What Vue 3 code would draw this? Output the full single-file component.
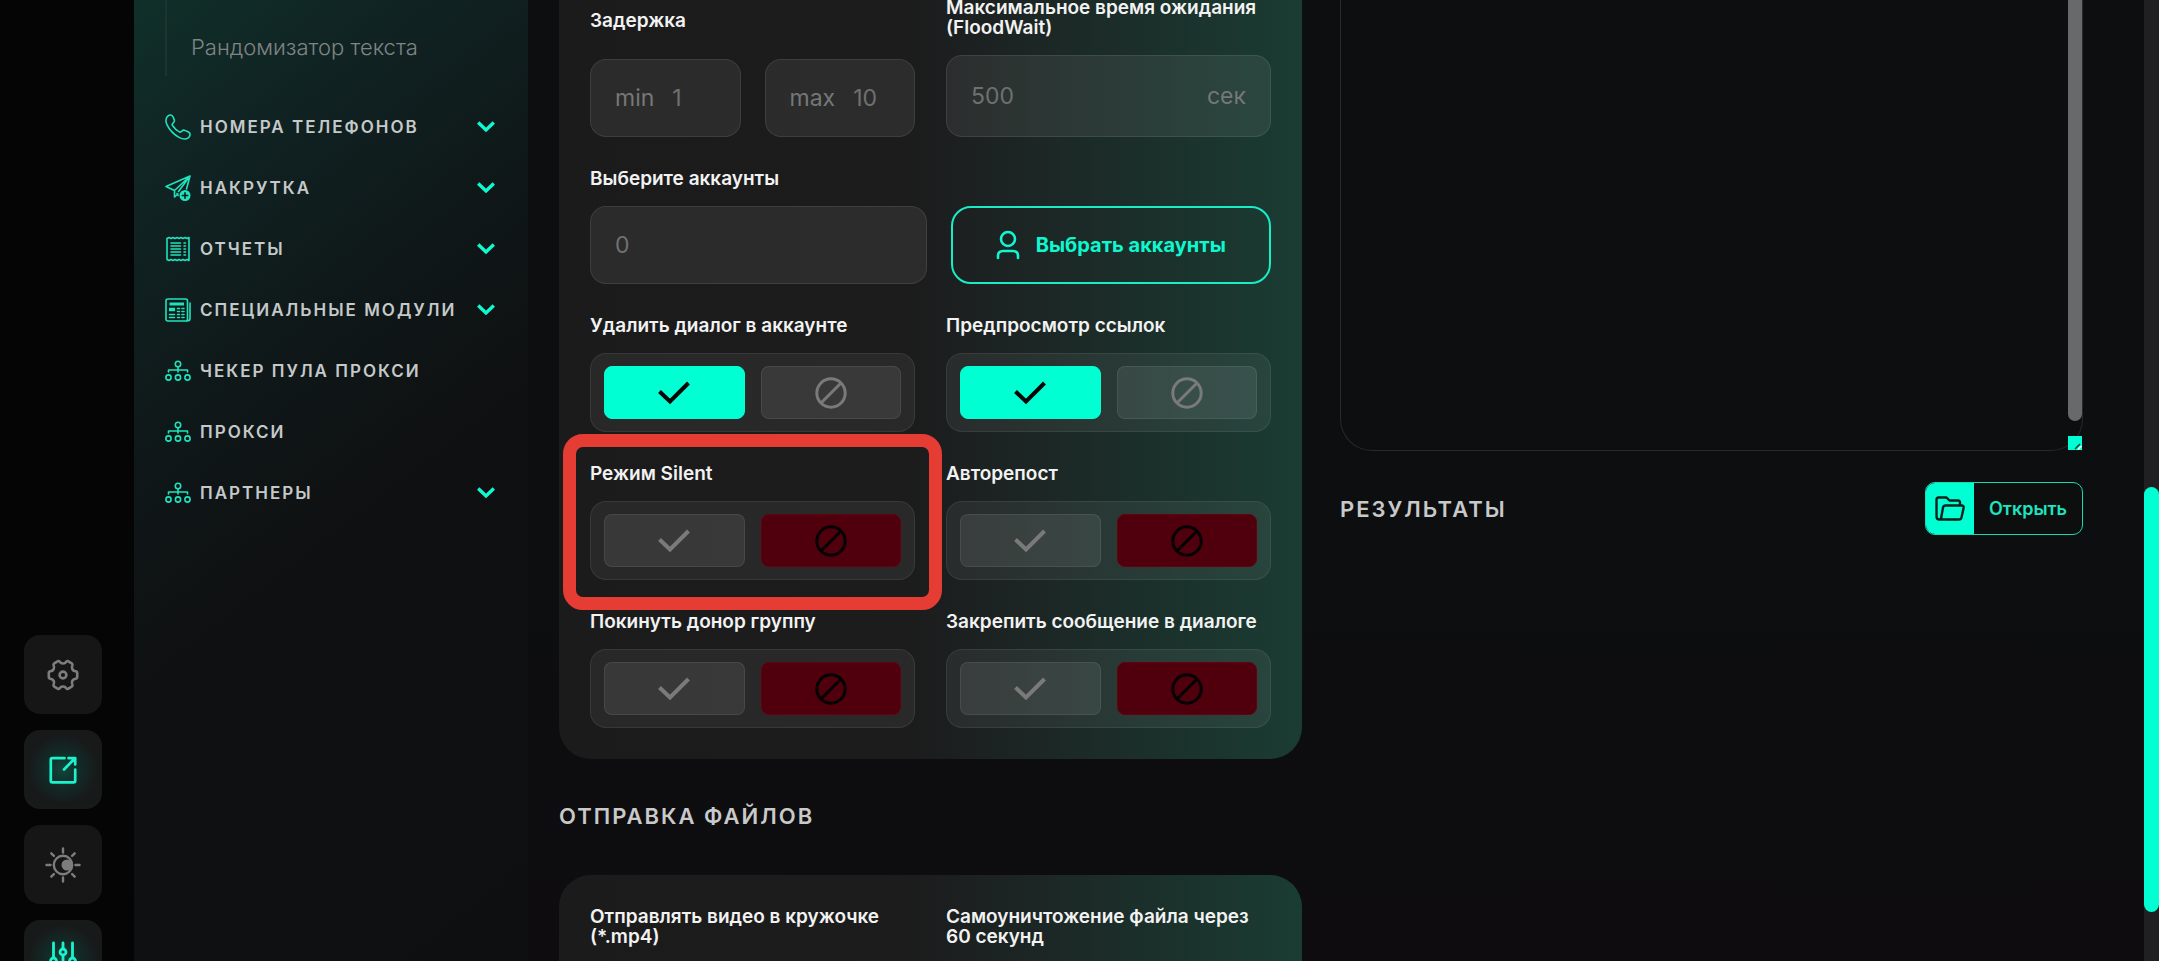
<template>
  <div class="shell">
    <aside class="rail">
      <button class="rail-btn" aria-label="Настройки">
        <svg viewBox="0 0 32 32" width="32" height="32" fill="none" stroke="currentColor" stroke-width="2.6" stroke-linejoin="round">
          <path d="M10.2 2.6C11 1.8 12.300 2 12.900 2.900C14 5 18 5 19.100 2.900C19.700 2 21 1.800 21.800 2.600L24.700 4.400C25.400 4.900 25.700 5.800 25.300 6.600C24 9 25.700 12 28.600 12.300C29.500 12.400 30.200 13.100 30.200 14V18C30.200 18.900 29.500 19.600 28.600 19.700C25.700 20 24 23 25.300 25.400C25.700 26.200 25.400 27.100 24.700 27.600L21.800 29.400C21 30.200 19.700 30 19.100 29.100C18 27 14 27 12.900 29.100C12.300 30 11 30.200 10.200 29.400L7.300 27.600C6.600 27.100 6.300 26.200 6.700 25.400C8 23 6.300 20 3.400 19.700C2.500 19.600 1.800 18.900 1.800 18V14C1.800 13.100 2.500 12.400 3.400 12.300C6.300 12 8 9 6.700 6.600C6.300 5.800 6.600 4.900 7.300 4.400Z" />
          <circle cx="16" cy="16" r="3.400" />
        </svg>
      </button>
      <button class="rail-btn active" aria-label="Открыть в новом окне">
        <svg viewBox="0 0 28 28" width="28" height="28" fill="none" stroke="currentColor" stroke-width="2.700" stroke-linecap="round" stroke-linejoin="round">
          <path d="M15.500 2.200H3.200Q1.800 2.200 1.800 3.600V25Q1.800 26.400 3.200 26.400H24.800Q26.200 26.400 26.200 25V13.500M15 13.500L26 2.200M19.500 2.200H26.200V8.500" />
        </svg>
      </button>
      <button class="rail-btn" aria-label="Тема">
        <svg viewBox="0 0 36 36" width="36" height="36" fill="none" stroke="currentColor" stroke-width="2.400" stroke-linecap="round">
          <circle cx="18" cy="18" r="9.200" />
          <circle cx="22" cy="18" r="5.500" fill="currentColor" stroke="none" />
          <path d="M18 1.500v4M18 30.500v4M1.500 18h4M30.500 18h4M6.300 6.300l2.600 2.600M27.100 27.100l2.600 2.600M29.700 6.300l-2.600 2.600M8.900 27.100l-2.600 2.600" />
        </svg>
      </button>
      <button class="rail-btn active" aria-label="Фильтры">
        <svg viewBox="0 0 28 38" width="28" height="38" fill="none" stroke="currentColor" stroke-width="2.800" stroke-linecap="round">
          <circle cx="4.500" cy="20" r="3" />
          <circle cx="14" cy="11" r="3" />
          <circle cx="23.500" cy="20" r="3" />
          <path d="M4.500 2v14M4.500 24v10M14 2v5M14 15v19M23.500 2v14M23.500 24v10" />
        </svg>
      </button>
    </aside>

    <nav class="sidebar">
      <div class="submenu"><a href="#">Рандомизатор текста</a></div>
      <a v-for="item in menu" :key="item.title" href="#" class="menu-item">
        <svg class="menu-icon" viewBox="0 0 26 26" width="26" height="26" fill="none" stroke="currentColor" stroke-width="1.600" stroke-linecap="round" stroke-linejoin="round">
          <template v-if="item.icon === 'phone'">
            <path d="M2.200 2.800C3.800 .6 6.700 .4 7.900 2.600L9.200 5.600C9.800 7.100 9.200 8.200 8 9.100C7.200 9.800 7 10.600 7.500 11.500C9.300 14.200 11.600 16.400 14.400 17.900C15.300 18.300 16 18.100 16.700 17.300C17.600 16.200 18.700 15.900 20 16.400L23.400 18C25.800 19.200 25.500 22.100 23.300 23.800C20.600 25.800 17.300 25.200 14 23.400C9 20.600 4.800 16.500 2.200 11.200C.6 8 .4 5.300 2.200 2.800Z" />
          </template>
          <template v-else-if="item.icon === 'plane'">
            <path d="M13 19L9.500 22V15.500L25 1L1 11.500L9.500 15.500M25 1L13.500 16.500M25 1L21.500 14M13 20.500L12 18.500" />
            <circle cx="20" cy="20.500" r="5.500" fill="currentColor" stroke="none" />
            <path d="M20 17.800v5.400M17.300 20.500h5.400" stroke="#0f1b1b" />
          </template>
          <template v-else-if="item.icon === 'report'">
            <path d="M2 2.500L4 1.500L6 2.500L8 1.500L10 2.500L12 1.500L14 2.500L16 1.500L18 2.500L20 1.500L22 2.500L24 1.500V24.500L22 23.500L20 24.500L18 23.500L16 24.500L14 23.500L12 24.500L10 23.500L8 24.500L6 23.500L4 24.500L2 23.500Z" />
            <path d="M6 7h9.500M6 10h9.500M6 13h9.500M6 16h9.500M6 19h9.500M19 7h1.500M19 10h1.500M19 13h1.500M19 16h1.500M19 19h1.500" />
          </template>
          <template v-else-if="item.icon === 'news'">
            <rect x="1" y="2" width="21.500" height="22" rx="2" />
            <path d="M25 6v15.500Q25 24 22 24" />
            <path d="M4.500 7h14.500" stroke-width="3" stroke-linecap="butt" />
            <path d="M4 12.500h6" stroke-width="3.500" stroke-linecap="butt" />
            <path d="M12.500 11.500h2M17 11.500h2M12.500 14.500h2M17 14.500h2M4.500 17.500h5M12.500 17.500h2M17 17.500h2M4.500 20.500h5M12.500 20.500h2M17 20.500h2" />
          </template>
          <template v-else>
            <circle cx="13" cy="6" r="2.700" />
            <circle cx="3.500" cy="19.500" r="2.600" />
            <circle cx="13" cy="19.500" r="2.600" />
            <circle cx="22.500" cy="19.500" r="2.600" />
            <path d="M13 9v5M3.500 14V12H22.500V14" />
          </template>
        </svg>
        <span class="menu-title">{{ item.title }}</span>
        <svg v-if="item.nested" class="chevron" viewBox="0 0 18 12" width="18" height="12" fill="none" stroke="currentColor" stroke-width="3.400">
          <path d="M1.200 1.500L9 9L16.800 1.500" />
        </svg>
      </a>
    </nav>

    <main class="content">
      <section class="column">
        <div class="card card-settings">
          <div class="row">
            <div class="field field-delay">
              <label class="label" for="delay-min">Задержка</label>
              <div class="pair">
                <div class="box">
                  <span class="hint">min</span>
                  <input id="delay-min" class="text-input" placeholder="1" />
                </div>
                <div class="box">
                  <span class="hint">max</span>
                  <input class="text-input" placeholder="10" aria-label="max" />
                </div>
              </div>
            </div>
            <div class="field">
              <label class="label" for="flood">Максимальное время ожидания (FloodWait)</label>
              <div class="box box-tall">
                <input id="flood" class="text-input" placeholder="500" />
                <span class="hint">сек</span>
              </div>
            </div>
          </div>

          <div class="field">
            <label class="label" for="accounts">Выберите аккаунты</label>
            <div class="accounts">
              <div class="box">
                <input id="accounts" class="text-input" placeholder="0" />
              </div>
              <button class="select-btn">
                <svg viewBox="0 0 24 30" width="24" height="30" fill="none" stroke="currentColor" stroke-width="2.600" stroke-linecap="round">
                  <circle cx="12" cy="9" r="7" />
                  <path d="M2 28V26Q2 21 7 21H17Q22 21 22 26V28" />
                </svg>
                Выбрать аккаунты
              </button>
            </div>
          </div>

          <div v-for="(pair, i) in toggles" :key="i" class="row">
            <div v-for="item in pair" :key="item.title" class="field" :class="{ marked: item.marked }">
              <span class="label">{{ item.title }}</span>
              <div class="toggle" role="group" :aria-label="item.title">
                <button class="toggle-btn" :class="{ on: item.value }" aria-label="Да" @click="item.value = true">
                  <svg viewBox="0 0 32 24" width="32" height="24" fill="none" stroke="currentColor" stroke-width="4">
                    <path d="M1.500 10.500L12 20.500L30.500 2" />
                  </svg>
                </button>
                <button class="toggle-btn" :class="{ off: !item.value }" aria-label="Нет" @click="item.value = false">
                  <svg viewBox="0 0 32 32" width="32" height="32" fill="none" stroke="currentColor" stroke-width="3">
                    <circle cx="16" cy="16" r="14.200" />
                    <path d="M6 26L26 6" />
                  </svg>
                </button>
              </div>
            </div>
          </div>
        </div>

        <h2 class="title">ОТПРАВКА ФАЙЛОВ</h2>

        <div class="card card-files">
          <div class="row">
            <span class="label">Отправлять видео в кружочке<br />(*.mp4)</span>
            <span class="label">Самоуничтожение файла через<br />60 секунд</span>
          </div>
        </div>
      </section>

      <section class="column">
        <div class="log">
          <textarea class="log-text" aria-label="Лог" readonly></textarea>
          <span class="log-thumb"></span>
          <svg class="log-grip" viewBox="0 0 14 14" width="14" height="14">
            <rect width="14" height="14" fill="#00ffd2" />
            <path d="M7 13L12 8" stroke="#0c3a33" stroke-width="1.500" />
            <path d="M10 13.500L13.500 10" stroke="#fff" stroke-width="1.500" />
          </svg>
        </div>
        <div class="results">
          <h2 class="title">РЕЗУЛЬТАТЫ</h2>
          <button class="open-btn">
            <span class="open-icon">
              <svg viewBox="0 0 30 25" width="30" height="25" fill="none" stroke="currentColor" stroke-width="2.400" stroke-linecap="round" stroke-linejoin="round">
                <path d="M25 8V6.500Q25 4.500 23 4.500H14.500L11.500 1.500H3.500Q1.500 1.500 1.500 3.500V20.500Q1.500 23.500 4.500 23.500H24Q26 23.500 26.500 21.500L28.600 12Q29 9.500 26.500 9.500H10.500Q8.500 9.500 8 11.500L6 23" />
              </svg>
            </span>
            <span class="open-text">Открыть</span>
          </button>
        </div>
      </section>
    </main>

    <div class="scrollbar"><span class="scrollbar-thumb"></span></div>
  </div>
</template>

<script setup>
import { ref } from 'vue';

const menu = [
  { title: 'НОМЕРА ТЕЛЕФОНОВ', icon: 'phone', nested: true },
  { title: 'НАКРУТКА', icon: 'plane', nested: true },
  { title: 'ОТЧЕТЫ', icon: 'report', nested: true },
  { title: 'СПЕЦИАЛЬНЫЕ МОДУЛИ', icon: 'news', nested: true },
  { title: 'ЧЕКЕР ПУЛА ПРОКСИ', icon: 'tree' },
  { title: 'ПРОКСИ', icon: 'tree' },
  { title: 'ПАРТНЕРЫ', icon: 'tree', nested: true }
];

const toggles = ref([
  [
    { title: 'Удалить диалог в аккаунте', value: true },
    { title: 'Предпросмотр ссылок', value: true }
  ],
  [
    { title: 'Режим Silent', value: false, marked: true },
    { title: 'Авторепост', value: false }
  ],
  [
    { title: 'Покинуть донор группу', value: false },
    { title: 'Закрепить сообщение в диалоге', value: false }
  ]
]);
</script>

<style>
body {
  margin: 0;
  background: #0d0e10;
}
</style>

<style scoped>
* {
  box-sizing: border-box;
}
.shell {
  display: flex;
  height: 100vh;
  overflow: hidden;
  background: linear-gradient(180deg, #0c0e10 0%, #0d0e10 60%, #0e0c0f 100%);
  color: #f2f2f2;
  font-family: Inter, "Liberation Sans", sans-serif;
}
button,
input,
textarea {
  font-family: inherit;
}
button {
  padding: 0;
  cursor: pointer;
}
a {
  color: inherit;
  text-decoration: none;
}

/* rail */
.rail {
  flex: 0 0 134px;
  display: flex;
  flex-direction: column;
  justify-content: flex-end;
  gap: 16px;
  padding-left: 24px;
  margin-bottom: -38px;
  background: #050505;
}
.rail-btn {
  flex: 0 0 79px;
  width: 78px;
  display: flex;
  align-items: center;
  justify-content: center;
  border: 0;
  border-radius: 16px;
  background: #161616;
  color: #7d7d7d;
}
.rail-btn.active {
  background: radial-gradient(circle, #10463c 0%, #122a26 32%, #181a1a 62%);
  color: #1cf2cb;
}

/* sidebar */
.sidebar {
  flex: 0 0 394px;
  padding: 0 33px 0 31px;
  background: linear-gradient(142deg, #10302a 0%, #102222 18%, #0f1718 38%, #0f1011 56%, #0e0f11 100%);
}
.submenu {
  height: 76px;
  margin-bottom: 20px;
  padding: 32px 0 0 24px;
  border-left: 2px solid #1d3530;
  color: #7f8584;
  font-size: 22px;
  font-weight: 300;
  line-height: 30px;
}
.menu-item {
  display: flex;
  align-items: center;
  height: 61px;
  color: #c5c9c9;
}
.menu-icon {
  flex: none;
  margin-right: 9px;
  color: #1fe3bd;
}
.menu-title {
  flex: 1;
  font-size: 17px;
  font-weight: 600;
  letter-spacing: 2px;
  white-space: nowrap;
}
.chevron {
  color: #0ffad0;
}

/* content */
.content {
  flex: 1;
  display: grid;
  grid-template-columns: 1fr 1fr;
  gap: 38px;
  padding: 0 61px 0 31px;
}
.column {
  min-width: 0;
}
.card {
  display: flex;
  flex-direction: column;
  gap: 32px;
  padding: 31px;
  background: linear-gradient(90deg, #1b1b1c 0%, #1c1c1d 48%, #1c2926 68%, #1a3c33 100%);
}
.card-settings {
  margin-top: -2px;
  padding-top: 0;
  border-radius: 0 0 32px 32px;
}
.card-files {
  padding-top: 32px;
  border-radius: 32px 32px 0 0;
}
.row {
  display: grid;
  grid-template-columns: 1fr 1fr;
  gap: 31px;
}
.field {
  position: relative;
  display: flex;
  flex-direction: column;
  justify-content: space-between;
  gap: 17px;
}
.field-delay {
  padding-top: 13px;
}
.label {
  font-size: 19px;
  font-weight: 600;
  line-height: 20px;
}
.pair {
  display: grid;
  grid-template-columns: 1fr 1fr;
  gap: 24px;
}
.accounts {
  display: grid;
  grid-template-columns: 21fr 20fr;
  gap: 24px;
}
.box {
  display: flex;
  align-items: center;
  gap: 18px;
  height: 78px;
  padding: 0 24px;
  border: 1px solid rgba(255, 255, 255, 0.09);
  border-radius: 16px;
  background: rgba(255, 255, 255, 0.07);
  color: #757877;
  font-size: 23px;
}
.box-tall {
  height: 82px;
}
.text-input {
  flex: 1;
  width: 0;
  min-width: 0;
  padding: 0;
  border: 0;
  outline: 0;
  background: none;
  color: inherit;
  font-size: 23px;
}
.text-input::placeholder {
  color: #6e7170;
}
.select-btn {
  display: flex;
  align-items: center;
  justify-content: center;
  gap: 16px;
  border: 2px solid #19ecc6;
  border-radius: 20px;
  background: none;
  color: #0ff7cf;
  font-size: 20px;
  font-weight: 700;
}
.toggle {
  display: grid;
  grid-template-columns: 1fr 1fr;
  gap: 16px;
  height: 79px;
  padding: 12px 13px;
  border: 1px solid rgba(255, 255, 255, 0.08);
  border-radius: 16px;
  background: rgba(255, 255, 255, 0.06);
}
.toggle-btn {
  display: flex;
  align-items: center;
  justify-content: center;
  border: 1px solid rgba(255, 255, 255, 0.08);
  border-radius: 8px;
  background: rgba(255, 255, 255, 0.08);
  color: #7a7a7a;
}
.toggle-btn.on {
  border-color: #00ffd2;
  background: #00ffd2;
  color: #050505;
}
.toggle-btn.off {
  border-color: #65000f;
  background: #50000d;
  color: #050203;
}

/* highlighted option */
.marked::after {
  content: "";
  position: absolute;
  inset: -30px -27px;
  border: 13px solid #e53c34;
  border-radius: 20px;
  pointer-events: none;
}
.title {
  margin: 0;
  color: #c9c9c9;
  font-size: 22px;
  font-weight: 600;
  letter-spacing: 2px;
  line-height: 30px;
}
.card + .title {
  margin: 42px 0 44px;
}

/* log and results */
.log {
  position: relative;
  height: 451px;
  border: 1px solid #27292b;
  border-top: 0;
  border-radius: 0 0 32px 32px;
}
.log-text {
  display: block;
  width: 100%;
  height: 100%;
  border: 0;
  outline: 0;
  resize: none;
  background: none;
  color: #c9c9c9;
}
.log-thumb {
  position: absolute;
  top: 0;
  right: 0;
  width: 14px;
  height: 421px;
  border-radius: 0 0 7px 7px;
  background: #68696b;
}
.log-grip {
  position: absolute;
  right: 0;
  bottom: 0;
}
.results {
  display: flex;
  align-items: center;
  justify-content: space-between;
  margin-top: 31px;
}
.open-btn {
  display: flex;
  height: 53px;
  overflow: hidden;
  border: 1px solid #19d9b5;
  border-radius: 10px;
  background: #0c0f0e;
  color: #1de5c0;
  font-size: 18px;
  font-weight: 600;
}
.open-icon {
  display: flex;
  align-items: center;
  justify-content: center;
  width: 48px;
  background: #00ffd2;
  color: #08201b;
}
.open-text {
  align-self: center;
  padding: 0 15px;
}

.scrollbar {
  flex: 0 0 15px;
  display: flex;
  flex-direction: column;
  justify-content: flex-end;
  padding-bottom: 49px;
  background: #202022;
}
.scrollbar-thumb {
  height: 425px;
  border-radius: 8px;
  background: #00ffd2;
}
</style>
